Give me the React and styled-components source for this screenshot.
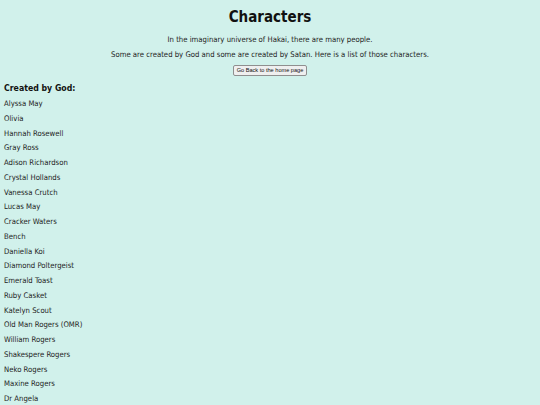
import React from 'react';
import styled, { createGlobalStyle } from 'styled-components';

const GOD = [
  'Alyssa May',
  'Olivia',
  'Hannah Rosewell',
  'Gray Ross',
  'Adison Richardson',
  'Crystal Hollands',
  'Vanessa Crutch',
  'Lucas May',
  'Cracker Waters',
  'Bench',
  'Daniella Koi',
  'Diamond Poltergeist',
  'Emerald Toast',
  'Ruby Casket',
  'Katelyn Scout',
  'Old Man Rogers (OMR)',
  'William Rogers',
  'Shakespere Rogers',
  'Neko Rogers',
  'Maxine Rogers',
  'Dr Angela',
];

const GlobalStyle = createGlobalStyle`
  html, body {
    margin: 0;
    background: #d1f1eb;
  }
  body {
    font-family: "DejaVu Sans Condensed", "DejaVu Sans", Verdana, sans-serif;
    color: #222;
  }
`;

const Page = styled.div`
  padding: 0 4px;
`;

const Header = styled.header`
  text-align: center;
  padding-top: 8px;
`;

const Title = styled.h1`
  font-size: 15px;
  font-weight: bold;
  color: #111;
  margin: 0 0 8.5px;
  line-height: 18px;
`;

const Intro = styled.p`
  font-size: 7.7px;
  line-height: 9px;
  margin: 0 0 6px;
`;

const BackButton = styled.button`
  display: block;
  margin: 1.5px auto 0;
  font-family: "Liberation Sans", Arial, sans-serif;
  font-size: 5.6px;
  line-height: 7px;
  padding: 1px 3px;
  background: #efefef;
  border: 1px solid #8f8f8f;
  border-radius: 2px;
  color: #111;
`;

const SectionTitle = styled.h2`
  font-size: 8.7px;
  font-weight: bold;
  color: #111;
  margin: 6px 0 3.6px;
  line-height: 12px;
`;

const List = styled.div`
  display: flex;
  flex-direction: column;
`;

const Item = styled.p`
  font-size: 7.7px;
  line-height: 14.75px;
  margin: 0;
`;

export default function App() {
  return (
    <Page>
      <GlobalStyle />
      <Header>
        <Title>Characters</Title>
        <Intro>In the imaginary universe of Hakai, there are many people.</Intro>
        <Intro>Some are created by God and some are created by Satan. Here is a list of those characters.</Intro>
        <BackButton>Go Back to the home page</BackButton>
      </Header>
      <SectionTitle>Created by God:</SectionTitle>
      <List>
        {GOD.map(name => (
          <Item key={name}>{name}</Item>
        ))}
      </List>
    </Page>
  );
}
